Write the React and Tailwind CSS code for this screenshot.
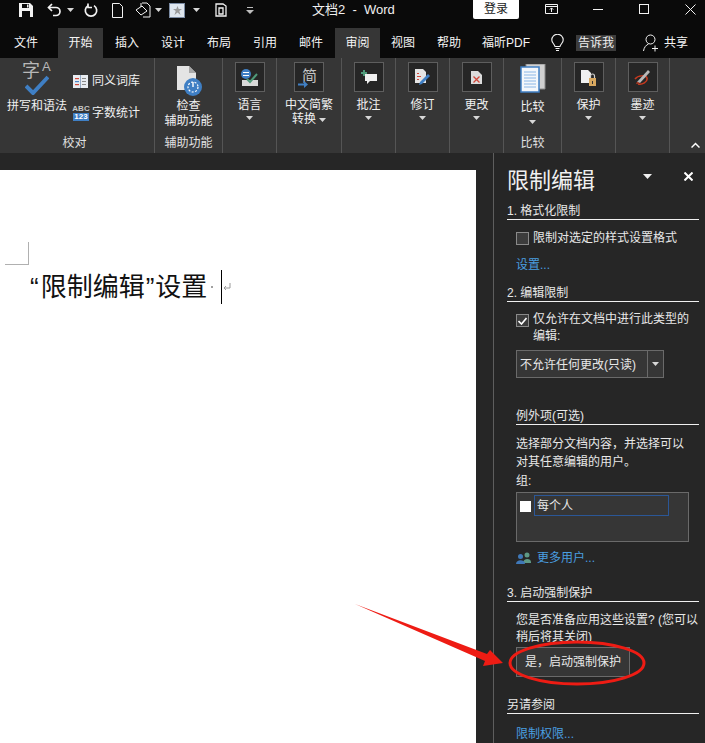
import React from 'react';

const CJK = { fontFamily: '"Liberation Sans", "Noto Sans CJK SC", sans-serif' };

const Caret = ({ className = '' }) => (
  <svg width="7" height="4" viewBox="0 0 7 4" className={className}><path d="M0 0h7L3.5 4z" fill="#d8d8d8" /></svg>
);

const IconBox = ({ children }) => (
  <div className="w-[30px] h-[30px] bg-[#262626] border border-[#5e5e5e] flex items-center justify-center">{children}</div>
);

// big ribbon button: icon in a dark box, label, dropdown caret
const RibbonButton = ({ width, icon, lines, inlineCaret }) => (
  <div className={`${width} h-[95px] border-r border-[#555555] flex flex-col items-center pt-[4px] shrink-0 relative`}>
    <IconBox>{icon}</IconBox>
    <div className="mt-[6px] text-[12px] leading-[15px] text-[#f0f0f0] text-center whitespace-nowrap">{lines[0]}</div>
    {inlineCaret ? (
      <div className="flex items-center gap-[3px] text-[12px] leading-[15px] text-[#f0f0f0] mt-[-1px]">{lines[1]}<Caret /></div>
    ) : (
      <Caret className="mt-[3px]" />
    )}
  </div>
);

const Heading = ({ children, className = '' }) => (
  <div className={`h-[19px] border-b border-[#f0f0f0] pt-[2px] text-[12px] leading-[17px] text-[#e8e8e8] ${className}`}>{children}</div>
);

const Tab = ({ width, active, children }) => (
  <div className={`${width} h-full flex items-center justify-center text-[12px] text-[#f4f4f4] ${active ? 'bg-[#363636]' : ''}`}>{children}</div>
);

export default function App() {
  return (
    <div className="w-[705px] h-[743px] overflow-hidden relative flex flex-col bg-[#262626]" style={CJK}>
      {/* title bar */}
      <div className="h-[28px] bg-[#0a0a0a] flex items-center pb-[8px] relative shrink-0">
        <svg width="14" height="14" viewBox="0 0 14 14" className="ml-[19px]"><path d="M0 0h11l3 3v11H0z" fill="#f2f2f2" /><path d="M3 1h7v4H3z" fill="#0a0a0a" /><path d="M3 8h8v6H3z" fill="#0a0a0a" /><path d="M8 1.5h1.5v3H8z" fill="#f2f2f2" /></svg>
        <svg width="15" height="14" viewBox="0 0 15 14" className="ml-[14px]" fill="none" stroke="#f2f2f2" strokeWidth="1.7"><path d="M5 1 1.5 4.5 5 8" /><path d="M2 4.5h7a4 4 0 0 1 0 8H6" /></svg>
        <Caret className="ml-[5px]" />
        <svg width="14" height="14" viewBox="0 0 14 14" className="ml-[10px]" fill="none" stroke="#f2f2f2" strokeWidth="1.7"><path d="M4 2.6A5.7 5.7 0 1 0 10 2.6" /><path d="M9 0.5v4h4" transform="translate(-5 0)" /></svg>
        <svg width="11" height="15" viewBox="0 0 11 15" className="ml-[14px]" fill="none" stroke="#f2f2f2"><path d="M.5.5h7l3 3v11H.5z" /></svg>
        <svg width="16" height="16" viewBox="0 0 16 16" className="ml-[12px]" fill="none" stroke="#f2f2f2"><path d="M7 1h5l3 3v11H8" /><path d="M1 8l6-4 5 5-6 4z" /><path d="M6 1v4" /></svg>
        <Caret className="ml-[4px]" />
        <div className="ml-[7px] w-[16px] h-[15px] bg-[#dfe6ee] border border-[#7b8ba3] flex items-center justify-center">
          <svg width="9" height="9" viewBox="0 0 9 9"><path d="M4.5 0l1.2 3H9L6.3 5 7.500 9 4.500 6.600 1.500 9l1.200-4L0 3h3.300z" fill="#9a9a9a" /></svg>
        </div>
        <Caret className="ml-[8px]" />
        <svg width="12" height="14" viewBox="0 0 12 14" className="ml-[15px]" fill="none" stroke="#f2f2f2" strokeWidth="1.3"><path d="M1 1h7l3 2v10H1z" /><path d="M4 5h4v6H4z" /></svg>
        <svg width="8" height="7" viewBox="0 0 8 7" className="ml-[19px]"><path d="M1 0h6v1H1z" fill="#bdbdbd" /><path d="M0 3h8L4 7z" fill="#bdbdbd" /></svg>
        <div className="ml-[58px] text-[13px] text-[#f0f0f0] whitespace-pre">文档2  -  Word</div>
        <div className="absolute left-[473px] top-0 w-[46px] h-[19px] bg-white rounded-b-[2px] text-[#1a1a1a] text-[12px] leading-[19px] text-center">登录</div>
        <svg width="13" height="10" viewBox="0 0 13 10" className="absolute left-[545px] top-[4px]" fill="none" stroke="#f2f2f2"><path d="M.5.5h12v9H.5z" /><path d="M.5 2.500h12" /><path d="M6.500 8V4M4.800 5.600l1.700-1.700 1.700 1.700" /></svg>
        <div className="absolute left-[593px] top-[9px] w-[10px] h-px bg-[#f2f2f2]" />
        <div className="absolute left-[639px] top-[4px] w-[10px] h-[10px] border border-[#f2f2f2]" />
        <svg width="11" height="11" viewBox="0 0 11 11" className="absolute left-[685px] top-[4px]" stroke="#f2f2f2"><path d="M.5.5l10 10M10.500.5l-10 10" /></svg>
      </div>

      {/* tabs */}
      <div className="h-[30px] bg-[#0a0a0a] flex items-center shrink-0 relative">
        <Tab width="w-[52px]">文件</Tab>
        <div className="w-[6px]" />
        <Tab width="w-[45px]" active>开始</Tab>
        <div className="w-px" />
        <Tab width="w-[46px]">插入</Tab>
        <Tab width="w-[46px]">设计</Tab>
        <Tab width="w-[46px]">布局</Tab>
        <Tab width="w-[46px]">引用</Tab>
        <Tab width="w-[46px]">邮件</Tab>
        <div className="w-px" />
        <Tab width="w-[45px]" active>审阅</Tab>
        <Tab width="w-[46px]">视图</Tab>
        <Tab width="w-[46px]">帮助</Tab>
        <Tab width="w-[68px]">福昕PDF</Tab>
        <svg width="13" height="18" viewBox="0 0 13 18" className="ml-[11px]" fill="none" stroke="#f2f2f2" strokeWidth="1.1"><path d="M4 12.500C3.500 10 .8 9 .8 6a5.700 5.700 0 0 1 11.400 0c0 3-2.700 4-3.200 6.500z" /><path d="M4.500 14.500h4M5 16.500h3" /></svg>
        <div className="ml-[12px] w-[40px] h-[16px] bg-[#3c3c3c] text-[12px] leading-[16px] text-center text-[#f0f0f0]">告诉我</div>
        <svg width="17" height="18" viewBox="0 0 17 18" className="ml-[27px]" fill="none" stroke="#f2f2f2" strokeWidth="1"><circle cx="7.500" cy="5.500" r="4.500" /><path d="M.5 17c.5-3.500 2.500-6 5-7" /><path d="M9 14.500h6M12 11.500v6" /></svg>
        <div className="ml-[4px] text-[12px] text-[#f4f4f4]">共享</div>
      </div>

      {/* ribbon */}
      <div className="h-[95px] bg-[#363636] flex shrink-0 relative">
        <div className="w-[155px] h-full border-r border-[#555555] relative shrink-0 flex flex-col items-center">
          <div className="flex flex-1 w-full">
            <div className="w-[73px] flex flex-col items-center pl-[1px] pt-[4px]">
              <div className="relative w-[30px] h-[29px]">
                <span className="absolute left-0 top-[-1px] text-[#b8b8b8] text-[18px] leading-[20px]">字</span>
                <span className="absolute left-[20px] top-[-3px] text-[#b8b8b8] text-[13px] leading-[16px]">A</span>
                <svg width="24" height="20" viewBox="0 0 24 20" className="absolute left-[3px] top-[13px]"><path d="M1 11l7 7L23 2" fill="none" stroke="#3f7fc4" strokeWidth="4" /></svg>
              </div>
              <div className="mt-[8px] text-[12px] leading-[15px] text-[#f0f0f0] whitespace-nowrap">拼写和语法</div>
            </div>
            <div className="flex flex-col pt-[13px]">
              <div className="flex items-center gap-[4px] h-[20px]">
                <svg width="15" height="13" viewBox="0 0 15 13"><path d="M0 0h15v13H0z" fill="#e8ecf1" /><path d="M7.200 0h.6v13h-.6z" fill="#5d7fa8" /><path d="M2 3h4v1.200H2z" fill="#d0473a" /><path d="M2 6h4v1.200H2z" fill="#4b86c9" /><path d="M2 9h4v1.200H2z" fill="#d0473a" /><path d="M9 3h4v1H9zM9 6h4v1H9zM9 9h4v1H9z" fill="#8a8a8a" /></svg>
                <span className="text-[12px] text-[#f0f0f0]">同义词库</span>
              </div>
              <div className="flex items-center gap-[3px] h-[20px] mt-[12px]">
                <div className="w-[16px] flex flex-col items-center">
                  <span className="text-[8px] leading-[8px] font-bold text-[#c8c8c8]">ABC</span>
                  <span className="w-[16px] text-[8px] leading-[8px] font-bold text-white bg-[#3f7fc4] text-center">123</span>
                </div>
                <span className="text-[12px] text-[#f0f0f0]">字数统计</span>
              </div>
            </div>
          </div>
          <div className="h-[17px] mb-[1px] pr-[5px] text-[12px] leading-[17px] text-[#e0e0e0]">校对</div>
        </div>
        <div className="w-[68px] h-full border-r border-[#555555] shrink-0 flex flex-col items-center pt-[8px]">
          <svg width="28" height="30" viewBox="0 0 28 30"><path d="M2 0h12l7 7v17H2z" fill="#e4e4e4" /><path d="M14 0l7 7h-7z" fill="#a8a8a8" /><circle cx="18" cy="21" r="9" fill="#3f7fc4" /><circle cx="18" cy="21" r="5" fill="none" stroke="#ffffff" strokeWidth="1.200" strokeDasharray="2 1.500" /><path d="M18 16v5" stroke="#ffffff" strokeWidth="1.400" /></svg>
          <div className="mt-[3px] text-[12px] leading-[15px] text-center text-[#f0f0f0]">检查<br />辅助功能</div>
          <div className="mt-[6px] text-[12px] leading-[17px] text-[#e0e0e0]">辅助功能</div>
        </div>
        <RibbonButton
          width="w-[54px]"
          lines={['语言']}
          icon={<svg width="18" height="17" viewBox="0 0 18 17"><circle cx="5" cy="5" r="5" fill="#3f7fc4" /><path d="M2 3.500h6M2 6.500h6" stroke="#ffffff" /><path d="M1 11h16v6H1z" fill="#d8d8d8" /><path d="M6 10l3 3 7-8" fill="none" stroke="#4f9a7a" strokeWidth="2" /></svg>}
        />
        <RibbonButton
          width="w-[65px]"
          lines={['中文简繁', '转换']}
          inlineCaret
          icon={<div className="relative w-[18px] h-[20px]"><span className="absolute left-[2px] top-0 text-[15px] leading-[18px] text-[#c4c4c4]">简</span><svg width="10" height="7" viewBox="0 0 10 7" className="absolute left-[-2px] bottom-[-1px]"><path d="M0 2.500h6V0l4 3.500L6 7V4.500H0z" fill="#3f7fc4" /></svg></div>}
        />
        <RibbonButton
          width="w-[54px]"
          lines={['批注']}
          icon={<svg width="16" height="15" viewBox="0 0 16 15"><path d="M4 4h12v7H9l-3 3v-3H4z" fill="#f0f0f0" /><path d="M2 0h2v2h2v2H4v2H2V4H0V2h2z" fill="#4f9a7a" /></svg>}
        />
        <RibbonButton
          width="w-[54px]"
          lines={['修订']}
          icon={<svg width="15" height="16" viewBox="0 0 15 16"><path d="M0 0h8l3 3v11H0z" fill="#e4e4e4" /><path d="M2 4h2v1H2zM2 7h4v1H2zM2 10h2v1H2z" fill="#d0473a" /><path d="M13 5l2 2-8 8-3 1 1-3z" fill="#3f7fc4" /></svg>}
        />
        <RibbonButton
          width="w-[54px]"
          lines={['更改']}
          icon={<svg width="11" height="13" viewBox="0 0 11 13"><path d="M0 0h7l4 4v9H0z" fill="#dcdcdc" /><path d="M2.500 5.500l6 6M8.500 5.500l-6 6" stroke="#d0473a" strokeWidth="1.300" /></svg>}
        />
        <div className="w-[58px] h-full border-r border-[#555555] shrink-0 flex flex-col items-center pt-[6px]">
          <svg width="26" height="29" viewBox="0 0 26 29"><path d="M6 0h19v25H6z" fill="#d0d0d0" stroke="#8a8a8a" /><path d="M1 3h18v25H1z" fill="#f4f7fb" stroke="#3f7fc4" strokeWidth="1.500" /><path d="M4 8h12M4 11h12M4 14h12M4 17h12M4 20h12M4 23h12" stroke="#8ab6e6" /></svg>
          <div className="mt-[7px] text-[12px] leading-[15px] text-[#f0f0f0]">比较</div>
          <Caret className="mt-[5px]" />
          <div className="mt-[11px] text-[12px] leading-[17px] text-[#e0e0e0]">比较</div>
        </div>
        <RibbonButton
          width="w-[54px]"
          lines={['保护']}
          icon={<svg width="15" height="17" viewBox="0 0 15 17"><path d="M0 1h7l3 3v10H0z" fill="#f0f0f0" /><path d="M8 9h7v8H8z" fill="#d8a860" /><path d="M9.500 9V7a2 2 0 0 1 4 0v2" fill="none" stroke="#d0d0d0" strokeWidth="1.200" /><path d="M11 12h1v3h-1z" fill="#333333" /></svg>}
        />
        <RibbonButton
          width="w-[54px]"
          lines={['墨迹']}
          icon={<svg width="17" height="16" viewBox="0 0 17 16"><path d="M4 15c4 1 10-2 9-6-1-3-9-3-12 1" fill="none" stroke="#c8391e" strokeWidth="1.500" /><path d="M3 13L14 1l2 2L6 14z" fill="#b8b8b8" /><path d="M3 13l3 1-4 1z" fill="#c8391e" /></svg>}
        />
        <svg width="9" height="6" viewBox="0 0 9 6" className="absolute left-[691px] top-[84px]" fill="none" stroke="#ffffff" strokeWidth="1.500"><path d="M.5 5.500l4-4 4 4" /></svg>
      </div>

      {/* body */}
      <div className="flex-1 flex min-h-0">
        <div className="w-[493px] pt-[17px] pr-[17px] shrink-0">
          <div className="h-full bg-white relative pt-[72px]">
            <div className="ml-[5px] w-[24px] h-[23px] border-r border-b border-[#b0b0b0]" />
            <div className="mt-[4px] ml-[30px] flex items-center h-[36px] text-[26px] leading-[36px] text-[#111111] whitespace-nowrap">
              <span className="mr-[2px]">“</span>
              <span>限制编辑</span>
              <span className="mx-[1px]">”</span>
              <span>设置</span>
              <span className="ml-[4px] w-[2px] h-[2px] bg-[#a0a0a0]" />
              <span className="ml-[8px] w-px h-[34px] bg-black" />
              <svg width="8" height="8" viewBox="0 0 8 8" className="ml-px" fill="none" stroke="#9a9a9a"><path d="M7 0v5H1M3 3L1 5l2 2" /></svg>
            </div>
          </div>
        </div>

        {/* restrict editing pane */}
        <div className="w-[212px] border-l border-[#5e5e5e] pl-[13px] pr-[6px] text-[12px] leading-[18px] text-[#e8e8e8] shrink-0">
          <div className="mt-[14px] h-[26px] flex items-center relative">
            <span className="text-[22px] leading-[26px] pt-[1px] text-[#f0f0f0]">限制编辑</span>
            <svg width="9" height="5" viewBox="0 0 9 5" className="absolute left-[136px] top-[7px]"><path d="M0 0h9L4.500 5z" fill="#f0f0f0" /></svg>
            <svg width="9" height="9" viewBox="0 0 9 9" className="absolute left-[177px] top-[5px]" stroke="#ffffff" strokeWidth="2"><path d="M.5.5l8 8M8.500.5l-8 8" /></svg>
          </div>

          <Heading className="mt-[8px]">1. 格式化限制</Heading>
          <div className="pl-[9px]">
            <div className="mt-[9px] h-[18px] flex items-center gap-[4px]">
              <div className="w-[13px] h-[13px] border border-[#8a8a8a] bg-[#3c3c3c]" />
              <span>限制对选定的样式设置格式</span>
            </div>
            <div className="mt-[9px] h-[17px] text-[#4a9ee0]">设置...</div>
          </div>

          <Heading className="mt-[10px]">2. 编辑限制</Heading>
          <div className="pl-[9px]">
            <div className="mt-[9px] flex gap-[4px]">
              <div className="w-[13px] h-[13px] mt-[3px] border border-[#8a8a8a] bg-[#3c3c3c] shrink-0 flex items-center justify-center">
                <svg width="9" height="8" viewBox="0 0 9 8" fill="none" stroke="#ffffff" strokeWidth="1.600"><path d="M.5 4l3 3 5-6" /></svg>
              </div>
              <span className="leading-[17px]">仅允许在文档中进行此类型的<br />编辑:</span>
            </div>
            <div className="mt-[5px] w-[148px] h-[28px] border border-[#6a6a6a] bg-[#363636] flex items-center">
              <span className="flex-1 pl-[3px] pt-[1px] whitespace-nowrap">不允许任何更改(只读)</span>
              <div className="w-[16px] h-full border-l border-[#6a6a6a] flex items-center justify-center">
                <Caret />
              </div>
            </div>
            <Heading className="mt-[28px]">例外项(可选)</Heading>
            <div className="mt-[10px]">选择部分文档内容，并选择可以<br />对其任意编辑的用户。</div>
            <div className="mt-[1px]">组:</div>
            <div className="mt-[2px] w-[173px] h-[50px] border border-[#6a6a6a] bg-[#363636] flex items-start pt-[2px] pl-[3px]">
              <div className="w-[11px] h-[11px] bg-white mt-[6px] shrink-0" />
              <div className="ml-[3px] w-[135px] h-[21px] border border-[#2b5797] pl-[2px] leading-[21px]">每个人</div>
            </div>
            <div className="mt-[7px] flex items-center gap-[6px] text-[#4a9ee0]">
              <svg width="15" height="12" viewBox="0 0 15 12"><circle cx="11" cy="3" r="2.500" fill="#5f9a86" /><path d="M7 11c0-5 8-5 8-1v1z" fill="#5f9a86" /><circle cx="4.500" cy="4.500" r="2.500" fill="#3f78b8" /><path d="M0 12c0-5 9-5 9 0z" fill="#3f78b8" /></svg>
              <span>更多用户...</span>
            </div>
          </div>

          <Heading className="mt-[16px]">3. 启动强制保护</Heading>
          <div className="pl-[9px]">
            <div className="mt-[10px] whitespace-nowrap leading-[17px]">您是否准备应用这些设置? (您可以<br />稍后将其关闭)</div>
            <div className="mt-[1px] w-[114px] h-[30px] border border-[#6a6a6a] bg-[#363636] flex items-center justify-center">是，启动强制保护</div>
          </div>

          <Heading className="mt-[18px]">另请参阅</Heading>
          <div className="pl-[9px] mt-[11px] text-[#4a9ee0]">限制权限...</div>
        </div>
      </div>

      {/* red annotation drawn over the screenshot */}
      <svg width="705" height="743" viewBox="0 0 705 743" className="absolute left-0 top-0 pointer-events-none">
        <ellipse cx="577" cy="663" rx="67" ry="21" fill="none" stroke="#ee1c14" strokeWidth="3" />
        <path d="M355 604 L487 654 L490 650 L503 663 L483 666 L485 661 Z" fill="#ee1c14" />
      </svg>
    </div>
  );
}
